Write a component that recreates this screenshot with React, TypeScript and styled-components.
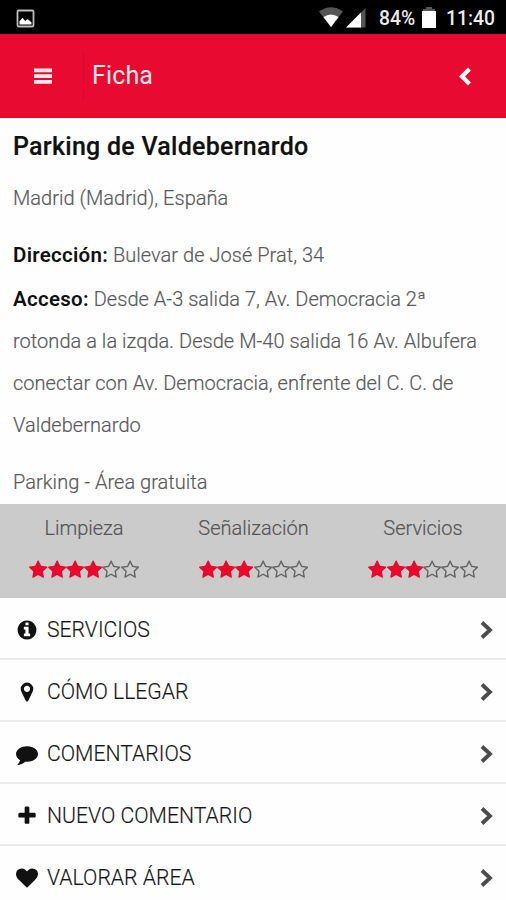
import React from "react";
import styled, { createGlobalStyle } from "styled-components";

const Global = createGlobalStyle`
  *, *::before, *::after { box-sizing: border-box; }
  html, body { margin: 0; padding: 0; background: #fefefe; }
  body { font-family: Roboto, "Liberation Sans", sans-serif; overflow: hidden; }
`;

const Screen = styled.div`
  width: 506px;
  height: 900px;
  overflow: hidden;
  display: flex;
  flex-direction: column;
  background: #fefefe;
`;

const StatusBar = styled.div`
  height: 34px;
  flex: none;
  display: flex;
  align-items: center;
  justify-content: space-between;
  padding: 2px 10px 0 16px;
  background: #000;
  color: #ececec;
`;

const StatusGroup = styled.div`
  display: flex;
  align-items: center;
`;

const StatusText = styled.span<{ $width: number }>`
  width: ${(p) => p.$width}px;
  padding-top: 1px;
  font-size: 19.3px;
  font-weight: 500;
  line-height: 32px;
  white-space: nowrap;
`;

const Header = styled.header`
  height: 84px;
  flex: none;
  display: flex;
  align-items: center;
  padding: 1px 34px 0 34px;
  background: #e80a30;
  color: #ffe9ea;
  border-bottom: 1px solid #dc0d1d;
`;

const HeaderTitle = styled.h1`
  flex: 1;
  margin: 0 0 0 31px;
  padding-left: 8px;
  border-left: 1px solid rgba(120, 0, 20, 0.12);
  font-size: 25px;
  font-weight: 400;
  line-height: 50px;
  letter-spacing: 0.15px;
`;

const Details = styled.section`
  height: 386px;
  flex: none;
  padding: 13px 13px 0;
  color: #5a5a5a;
`;

const PlaceName = styled.h2`
  margin: 0;
  font-size: 25px;
  line-height: 32px;
  font-weight: 500;
  letter-spacing: 0.27px;
  color: #111;
  -webkit-text-stroke: 0.2px #111;
`;

const Line = styled.p<{ $top?: number }>`
  margin: ${(p) => p.$top ?? 0}px 0 0;
  font-size: 20px;
  font-weight: 300;
  line-height: 42.3px;
  letter-spacing: 0.035px;
  white-space: nowrap;
  -webkit-text-stroke: 0.2px currentColor;
`;

const Label = styled.strong`
  font-size: 20.5px;
  line-height: 1;
  font-weight: 600;
  letter-spacing: 0.28px;
  color: #111;
  -webkit-text-stroke: 0;
`;

const Ratings = styled.section`
  height: 94px;
  flex: none;
  display: grid;
  grid-template-columns: 167px 172px 167px;
  background: #cbcbcb;
  color: #565656;
`;

const Rating = styled.div`
  display: flex;
  flex-direction: column;
  align-items: center;
  padding: 8px 0 0 1px;
  font-size: 20px;
  font-weight: 300;
  line-height: 32px;
  -webkit-text-stroke: 0.2px currentColor;
`;

const Stars = styled.div`
  display: flex;
  margin-top: 16px;
`;

const Menu = styled.nav`
  display: flex;
  flex-direction: column;
`;

const MenuRow = styled.div`
  height: 62px;
  flex: none;
  display: flex;
  align-items: center;
  padding: 3px 12px 0 16px;
  border-bottom: 2px solid #ececec;
  color: #181818;
`;

const MenuLabel = styled.span`
  flex: 1;
  margin-left: 9px;
  font-size: 21.2px;
  font-weight: 300;
  line-height: 28px;
  -webkit-text-stroke: 0.15px currentColor;
`;

const Glyph = styled.svg`
  display: block;
  flex: none;
`;

const shapes = {
  info: "M1152 1376v-160q0-14-9-23t-23-9h-96v-512q0-14-9-23t-23-9h-320q-14 0-23 9t-9 23v160q0 14 9 23t23 9h96v320h-96q-14 0-23 9t-9 23v160q0 14 9 23t23 9h448q14 0 23-9t9-23zm-128-896v-160q0-14-9-23t-23-9h-192q-14 0-23 9t-9 23v160q0 14 9 23t23 9h192q14 0 23-9t9-23zm640 416q0 209-103 385.5t-279.5 279.5-385.5 103-385.5-103-279.5-279.5-103-385.5 103-385.5 279.5-279.5 385.5-103 385.5 103 279.5 279.5 103 385.5z",
  marker: "M1152 640q0-106-75-181t-181-75-181 75-75 181 75 181 181 75 181-75 75-181zm256 0q0 109-33 179l-364 774q-16 33-47.5 52t-67.5 19-67.5-19-46.5-52l-365-774q-33-70-33-179 0-212 150-362t362-150 362 150 150 362z",
  comment: "M1792 896q0 174-120 321.5t-326 233-450 85.5q-70 0-145-8-198 175-460 242-49 14-114 22-17 2-30.5-9t-17.5-29v-1q-3-4-.5-12t2-10 4.5-9.5l6-9 7-8.5 8-9q7-8 31-34.5t34.5-38 31-39.5 32.5-51 27-59 26-76q-157-89-247.5-220t-90.5-281q0-130 71-248.5t191-204.5 286-136.5 348-50.5q244 0 450 85.5t326 233 120 321.5z",
  plus: "M1600 736v192q0 40-28 68t-68 28h-416v416q0 40-28 68t-68 28h-192q-40 0-68-28t-28-68v-416h-416q-40 0-68-28t-28-68v-192q0-40 28-68t68-28h416v-416q0-40 28-68t68-28h192q40 0 68 28t28 68v416h416q40 0 68 28t28 68z",
  heart: "M896 1664q-26 0-44-18l-624-602q-10-8-27.5-26t-55.5-65.5-68-97.5-53.5-121-23.5-138q0-220 127-344t351-124q62 0 126.5 21.5t120 58 95.5 68.5 76 68q36-36 76-68t95.5-68.5 120-58 126.5-21.5q224 0 351 124t127 344q0 221-229 450l-623 600q-18 18-44 18z",
  star: "M1728 647q0 22-26 48l-363 354 86 500q1 7 1 20 0 21-10.5 35.5t-30.5 14.5q-19 0-40-12l-449-236-449 236q-22 12-40 12-21 0-31.5-14.5t-10.5-35.5q0-6 2-20l86-500-364-354q-25-27-25-48 0-37 56-46l502-73 225-455q19-41 49-41t49 41l225 455 502 73q56 9 56 46z",
  starOutline: "M1201 1004l306-297-422-62-189-382-189 382-422 62 306 297-73 421 378-199 377 199zm527-357q0 22-26 48l-363 354 86 500q1 7 1 20 0 50-41 50-19 0-40-12l-449-236-449 236q-22 12-40 12-21 0-31.5-14.5t-10.5-35.5q0-6 2-20l86-500-364-354q-25-27-25-48 0-37 56-46l502-73 225-455q19-41 49-41t49 41l225 455 502 73q56 9 56 46z",
};

type ShapeName = keyof typeof shapes;

const MenuIcon = ({ name }: { name: ShapeName }) => (
  <Glyph width="22" height="22" viewBox="0 0 1792 1792" fill="#111">
    <path d={shapes[name]} />
  </Glyph>
);

const Star = ({ filled }: { filled: boolean }) => (
  <Glyph width="18.25" height="19.7" viewBox="64 0 1664 1792" fill={filled ? "#e8092d" : "#666"}>
    <path d={filled ? shapes.star : shapes.starOutline} />
  </Glyph>
);

const ratings = [
  { label: "Limpieza", value: 4 },
  { label: "Señalización", value: 3 },
  { label: "Servicios", value: 3 },
];

const menu: { label: string; icon: ShapeName }[] = [
  { label: "SERVICIOS", icon: "info" },
  { label: "CÓMO LLEGAR", icon: "marker" },
  { label: "COMENTARIOS", icon: "comment" },
  { label: "NUEVO COMENTARIO", icon: "plus" },
  { label: "VALORAR ÁREA", icon: "heart" },
];

export default function App() {
  return (
    <Screen>
      <Global />
      <StatusBar>
        <Glyph width="19" height="19" viewBox="0 0 19 19">
          <rect x="1.5" y="1.5" width="16" height="16" rx="1.2" fill="none" stroke="#bdbdbd" strokeWidth="1.8" />
          <path d="M3.500 15.500v-3.200l3-3.600 2.700 3.200 2-1.700 1.400.6 2.900 2.600v2.100z" fill="#fff" />
        </Glyph>
        <StatusGroup>
          <Glyph width="60" height="24" viewBox="0 0 60 24">
            <path d="M0 5.500Q12-3 24 5.500L12 21z" fill="#555" />
            <path d="M4.500 11Q12 6 19.500 11L12 21z" fill="#fff" />
            <path d="M46.500 2v19.500H27z" fill="#555" />
            <path d="M42 6.500V21.500H27z" fill="#fff" />
          </Glyph>
          <StatusText $width={42}>84%</StatusText>
          <Glyph width="25" height="24" viewBox="0 0 25 24">
            <path d="M5 1h6v2h3v3H2V3h3z" fill="#555" />
            <path d="M1 5h14v17H1z" fill="#fff" />
          </Glyph>
          <StatusText $width={50}>11:40</StatusText>
        </StatusGroup>
      </StatusBar>
      <Header>
        <Glyph width="18" height="17" viewBox="0 0 18 17" fill="#ffe9ea">
          <path d="M0 .5h18v3.700H0zM0 6.300h18v3.700H0zM0 12.100h18v3.700H0z" />
        </Glyph>
        <HeaderTitle>Ficha</HeaderTitle>
        <Glyph width="14" height="20" viewBox="0 0 14 20">
          <path d="M11.500 3L4 10.500l7.500 7.500" fill="none" stroke="#fff" strokeWidth="4.200" />
        </Glyph>
      </Header>
      <Details>
        <PlaceName>Parking de Valdebernardo</PlaceName>
        <Line $top={14}>Madrid (Madrid), España</Line>
        <Line $top={15}>
          <Label>Dirección:</Label> Bulevar de José Prat, 34
        </Line>
        <Line $top={1}>
          <Label>Acceso:</Label> Desde A-3 salida 7, Av. Democracia 2ª
        </Line>
        <Line>rotonda a la izqda. Desde M-40 salida 16 Av. Albufera</Line>
        <Line>conectar con Av. Democracia, enfrente del C. C. de</Line>
        <Line>Valdebernardo</Line>
        <Line $top={14}>Parking - Área gratuita</Line>
      </Details>
      <Ratings>
        {ratings.map((r) => (
          <Rating key={r.label}>
            {r.label}
            <Stars>
              {[1, 2, 3, 4, 5, 6].map((n) => (
                <Star key={n} filled={n <= r.value} />
              ))}
            </Stars>
          </Rating>
        ))}
      </Ratings>
      <Menu>
        {menu.map((m) => (
          <MenuRow key={m.label}>
            <MenuIcon name={m.icon} />
            <MenuLabel>{m.label}</MenuLabel>
            <Glyph width="15" height="20" viewBox="0 0 15 20">
              <path d="M3 2.500L11 10l-8 7.500" fill="none" stroke="#4c4c4c" strokeWidth="3.800" />
            </Glyph>
          </MenuRow>
        ))}
      </Menu>
    </Screen>
  );
}
